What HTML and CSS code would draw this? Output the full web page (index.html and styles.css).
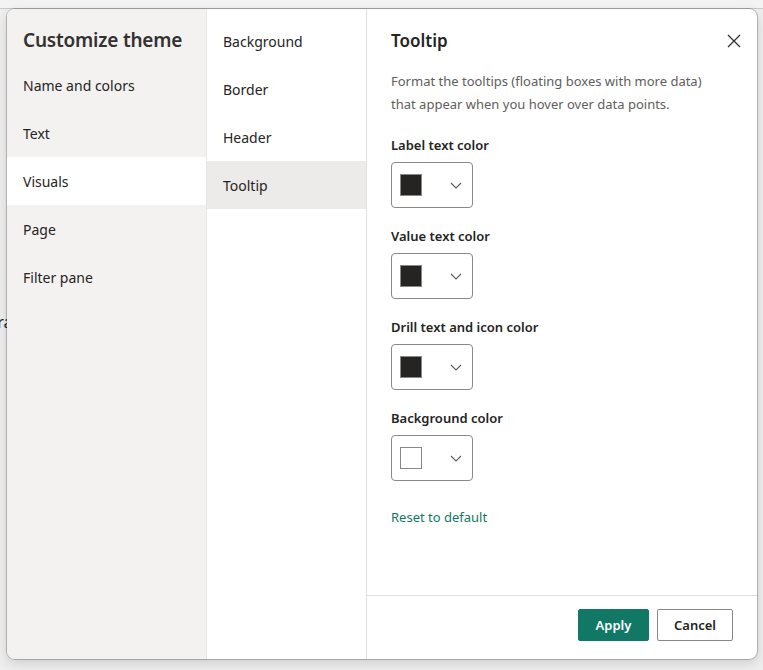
FILE: index.html
```html
<!DOCTYPE html>
<html>
<head>
<meta charset="utf-8">
<link rel="stylesheet" href="styles.css">
</head>
<body>
<div class="topbar"></div>
<div class="backdrop">
  <p class="bg-text">Extra</p>
</div>
<div class="dialog">
  <nav class="nav">
    <h1 class="title">Customize theme</h1>
    <div class="nav-item">Name and colors</div>
    <div class="nav-item">Text</div>
    <div class="nav-item active">Visuals</div>
    <div class="nav-item">Page</div>
    <div class="nav-item">Filter pane</div>
  </nav>
  <div class="sub">
    <div class="sub-item">Background</div>
    <div class="sub-item">Border</div>
    <div class="sub-item">Header</div>
    <div class="sub-item active">Tooltip</div>
  </div>
  <section class="panel">
    <div class="panel-body">
      <div class="panel-head">
        <h2 class="panel-title">Tooltip</h2>
        <svg class="close" width="14" height="14" viewBox="0 0 14 14"><path d="M1 1 L13 13 M13 1 L1 13" stroke="#323130" stroke-width="1.3" fill="none"/></svg>
      </div>
      <p class="desc">Format the tooltips (floating boxes with more data) that appear when you hover over data points.</p>
      <div class="field">
        <div class="label">Label text color</div>
        <div class="picker"><span class="swatch dark"></span><svg class="chev" width="12" height="7" viewBox="0 0 12 7"><path d="M1 1 L6 6 L11 1" stroke="#605e5c" stroke-width="1.1" fill="none"/></svg></div>
      </div>
      <div class="field">
        <div class="label">Value text color</div>
        <div class="picker"><span class="swatch dark"></span><svg class="chev" width="12" height="7" viewBox="0 0 12 7"><path d="M1 1 L6 6 L11 1" stroke="#605e5c" stroke-width="1.1" fill="none"/></svg></div>
      </div>
      <div class="field">
        <div class="label">Drill text and icon color</div>
        <div class="picker"><span class="swatch dark"></span><svg class="chev" width="12" height="7" viewBox="0 0 12 7"><path d="M1 1 L6 6 L11 1" stroke="#605e5c" stroke-width="1.1" fill="none"/></svg></div>
      </div>
      <div class="field">
        <div class="label">Background color</div>
        <div class="picker"><span class="swatch light"></span><svg class="chev" width="12" height="7" viewBox="0 0 12 7"><path d="M1 1 L6 6 L11 1" stroke="#605e5c" stroke-width="1.1" fill="none"/></svg></div>
      </div>
      <a class="reset">Reset to default</a>
    </div>
    <footer class="footer">
      <button class="btn primary">Apply</button>
      <button class="btn">Cancel</button>
    </footer>
  </section>
</div>
</body>
</html>
```

FILE: styles.css
```css
* { box-sizing: border-box; }
html, body { margin: 0; padding: 0; }
body {
  width: 763px;
  height: 670px;
  overflow: hidden;
  background: #e9e9e9;
  font-family: "Noto Sans", "Open Sans", sans-serif;
  color: #252423;
}
.topbar {
  height: 9px;
  background: #f3f3f3;
  border-bottom: 1px solid #c9c9c9;
}
.backdrop {
  height: 661px;
  background: #eeeeee;
  padding-top: 302px;
}
.bg-text {
  margin: 0 0 0 -26px;
  font-size: 16px;
  color: #252423;
}
.dialog {
  position: absolute;
  left: 7px;
  top: 9px;
  width: 750px;
  height: 650px;
  background: #fff;
  border-radius: 8px;
  overflow: hidden;
  display: grid;
  grid-template-columns: 200px 160px 1fr;
  box-shadow: 0 0 0 1px rgba(0,0,0,0.22), 0 4px 12px rgba(0,0,0,0.14);
}
.nav {
  background: #f3f2f1;
  border-right: 1px solid #e8e6e4;
}
.title {
  margin: 0;
  padding: 17px 0 0 16px;
  height: 52px;
  font-size: 19px;
  line-height: 28px;
  font-weight: 600;
  color: #323130;
  letter-spacing: -0.2px;
}
.nav-item, .sub-item {
  height: 48px;
  line-height: 50px;
  padding-left: 16px;
  font-size: 14px;
  color: #252423;
}
.nav-item.active { background: #fff; }
.sub {
  padding-top: 8px;
  border-right: 1px solid #e1dfdd;
}
.sub-item.active { background: #edebe9; }
.panel {
  display: flex;
  flex-direction: column;
}
.panel-body {
  flex: 1;
  padding: 17px 16px 0 24px;
}
.panel-head {
  display: flex;
  justify-content: space-between;
  align-items: center;
  height: 28px;
}
.panel-title {
  margin: 0;
  font-size: 17px;
  font-weight: 600;
  color: #252423;
}
.close { margin-right: 0; margin-top: 1px; }
.desc {
  margin: 16px 0 0;
  font-size: 13px;
  line-height: 23px;
  color: #605e5c;
  width: 330px;
}
.field { margin-top: 19px; }
.field + .field { margin-top: 18px; }
.label {
  font-size: 13px;
  font-weight: 600;
  line-height: 20px;
  color: #252423;
}
.picker {
  margin-top: 7px;
  width: 82px;
  height: 46px;
  border: 1px solid #8a8886;
  border-radius: 4px;
  display: flex;
  align-items: center;
  padding: 0 8px 0 8px;
  justify-content: space-between;
}
.swatch {
  width: 22px;
  height: 22px;
  border: 1px solid #8a8886;
}
.swatch.dark { background: #252423; }
.swatch.light { background: #fff; }
.chev { margin-right: 2px; }
.reset {
  display: block;
  margin-top: 26px;
  font-size: 13px;
  line-height: 20px;
  color: #117865;
}
.footer {
  border-top: 1px solid #e1dfdd;
  height: 64px;
  padding: 13px 24px 0 0;
  display: flex;
  justify-content: flex-end;
  gap: 8px;
  align-items: flex-start;
}
.btn {
  height: 32px;
  padding: 0 15px;
  border: 1px solid #8a8886;
  border-radius: 2px;
  background: #fff;
  font-family: "Noto Sans", "Open Sans", sans-serif;
  font-size: 13px;
  font-weight: 600;
  color: #252423;
  min-width: 76px;
}
.btn.primary {
  background: #117865;
  border-color: #117865;
  color: #fff;
  min-width: 71px;
}
```
